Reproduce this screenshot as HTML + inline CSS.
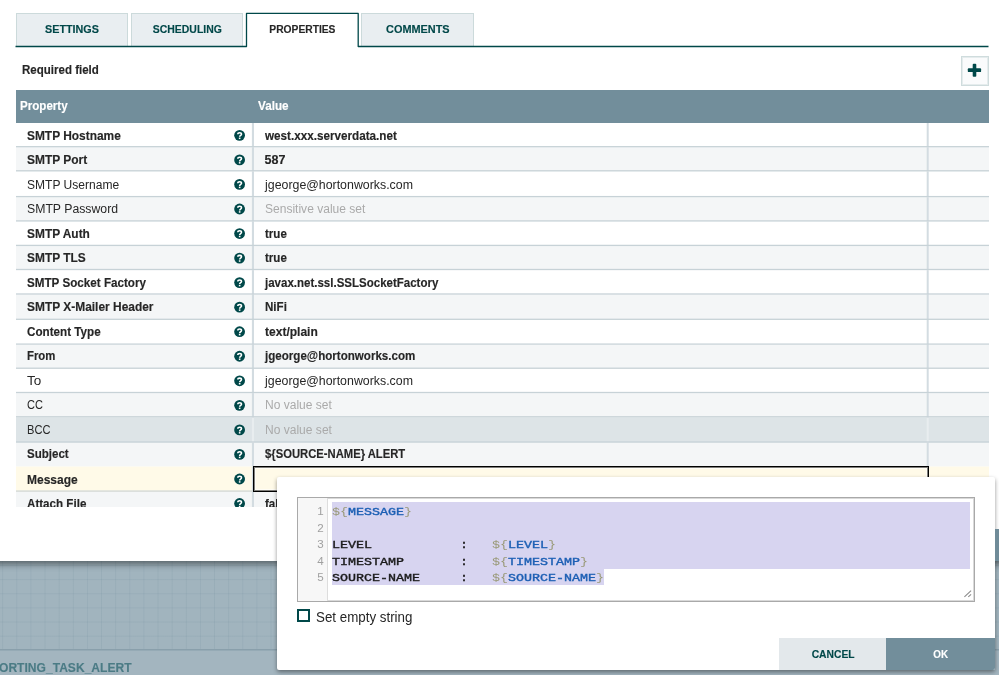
<!DOCTYPE html>
<html lang="en">
<head>
<meta charset="utf-8">
<title>Configure Reporting Task</title>
<style>
*{box-sizing:border-box;margin:0;padding:0}
html,body{width:999px;height:675px;overflow:hidden}
body{position:relative;font-family:"Liberation Sans",sans-serif;color:#262626;background:#a1b4be;font-size:13px}
.abs{position:absolute}
.sx{display:inline-block;white-space:nowrap;-webkit-text-stroke:.15px currentColor}
#wrap{position:absolute;left:0;top:0;width:999px;height:675px;will-change:transform;overflow:hidden}
/* canvas */
#canvas{left:0;top:0;width:999px;height:650px;background-color:#a1b4be;
 background-image:linear-gradient(to right,rgba(110,140,155,.17) 1.3px,transparent 1.3px),linear-gradient(to bottom,rgba(110,140,155,.17) 1.3px,transparent 1.3px);
 background-size:14.13px 14.13px;background-position:2.2px 14.2px}
#footer{left:0;top:649px;width:999px;height:26px;background:#a3b5bf;border-top:1px solid #899fab;box-shadow:inset 0 1px 0 #95aab5}
#footer span{-webkit-text-stroke:.15px currentColor;position:absolute;left:-1.5px;top:10px;font-weight:bold;font-size:13.3px;color:#4b7b85;white-space:nowrap;line-height:16px;transform-origin:0 50%;transform:scaleX(0.908)}
/* dialog */
#dialog{left:-20px;top:-20px;width:1040px;height:581px;background:#fff;box-shadow:0 3px 7px rgba(0,0,0,.48)}
#apply{left:995px;top:529px;width:10px;height:32px;background:#6f8b98;z-index:1}
/* tabs */
.tab{top:13px;height:33px;width:112.5px;background:#e9eef1;border:1px solid #ccdadb;border-bottom:none;color:#004849;font-weight:bold;font-size:11.6px;text-align:center;line-height:30px}
.tab.sel{background:#fff;border:none;color:#262626;height:35px;line-height:32px;z-index:2}
#tabsvg{left:0;top:0;width:999px;height:60px;z-index:3}
#req{-webkit-text-stroke:.15px currentColor;left:21.6px;top:62.3px;font-weight:bold;font-size:12.6px;line-height:16px;transform-origin:0 50%;transform:scaleX(0.915);white-space:nowrap}
#plus{left:961px;top:56px;width:28px;height:30px;background:#fafbfc;border:1px solid #cfdcdd;box-shadow:inset 0 0 0 1px rgba(204,218,219,.45)}
#plus svg{position:absolute;left:-1px;top:-1px;width:28px;height:30px}
#plus i{position:absolute;background:#004849;border-radius:.8px}
/* table */
#thead{left:15.5px;top:90px;width:973px;height:33px;background:#728e9b;color:#fff;font-weight:bold;font-size:12.6px;line-height:33.6px}
#thead span{-webkit-text-stroke:.15px currentColor;position:absolute;top:0;transform-origin:0 50%;white-space:nowrap}
.row{left:16px;width:973px;overflow:hidden}
#grid{left:16px;top:123px;width:973px;height:384px}
#rows{position:absolute;left:0;top:0;width:999px;height:507px;overflow:hidden}
.row .n{position:absolute;left:11px;top:0;transform-origin:0 50%;line-height:24px;font-size:12.5px;white-space:nowrap}
.row .v{position:absolute;left:249px;top:0;transform-origin:0 50%;line-height:24px;font-size:12.5px;white-space:nowrap}
.row .b{font-weight:bold;-webkit-text-stroke:.15px currentColor}
.row .u{color:#aaa}
.row .qw{position:absolute;left:217px;width:13px;height:13px}
.row .q{display:block;width:13px;height:13px}
/* popup */
#cut{left:0;top:507px;width:999px;height:54px;background:#fff}
#active{left:253px;top:466px;width:676px;height:26px;border:1px solid #000;box-shadow:inset 0 0 0 1px rgba(0,0,0,.5),inset 0 0 0 2px rgba(255,255,255,.55);background:#fffae8}
#pop{left:277px;top:477px;width:718px;height:192.7px;background:#fff;border-radius:2px;box-shadow:0 2px 4px rgba(0,0,0,.42)}
#ed{left:20px;top:20px;width:678px;height:105px;border:1px solid #a9a9a9;box-shadow:inset 0 0 0 1px rgba(170,170,170,.45);background:#fff;overflow:hidden}
#gut{left:0;top:0;width:30px;height:103px;background:#f7f7f7;border-right:1px solid #ddd}
.ln{position:absolute;left:0;width:25.6px;text-align:right;color:#a0a0a0;font-size:11.6px;height:16.6px;line-height:16.6px}
.selbg{position:absolute;background:#d7d4f0}
.cl{position:absolute;left:34.2px;height:16.6px;line-height:16.6px;font-family:"Liberation Mono",monospace;font-size:11.8px;transform-origin:0 50%;transform:scaleX(1.13);white-space:pre;color:#1a1a1a;font-weight:normal;-webkit-text-stroke:.4px currentColor}
.cl .k{color:#999977;-webkit-text-stroke:0}
.cl .a{color:#1c5fb4}
#grip{left:665px;top:91px;width:10px;height:10px}
#cb{left:20px;top:132px;width:13px;height:13px;border:2px solid #004849;background:#fff}
#cbl{left:39.3px;top:131.5px;font-size:13.8px;line-height:18px;white-space:nowrap;transform-origin:0 50%;transform:scaleX(0.967)}
.btn{top:161px;height:31.5px;line-height:32px;text-align:center;font-weight:bold;font-size:11.6px}
#cancel{left:502px;width:108px;background:#e3e8eb;color:#004849}
#ok{border-bottom-right-radius:2px}
#ok{left:609.3px;width:108.7px;background:#728e9b;color:#fff}
</style>
</head>
<body>
<div id="wrap">
<div id="canvas" class="abs"></div>
<div id="footer" class="abs"><span>ORTING_TASK_ALERT</span></div>
<div id="dialog" class="abs"></div>

<div class="abs tab" style="left:15.5px"><span class="sx" style="transform:scaleX(0.93)">SETTINGS</span></div>
<div class="abs tab" style="left:130.8px"><span class="sx" style="transform:scaleX(0.9)">SCHEDULING</span></div>
<div class="abs tab sel" style="left:246.1px"><span class="sx" style="transform:scaleX(0.885)">PROPERTIES</span></div>
<div class="abs tab" style="left:361.4px"><span class="sx" style="transform:scaleX(0.94)">COMMENTS</span></div>
<svg id="tabsvg" class="abs" viewBox="0 0 999 60"><path d="M15.5 46.5H246.5V13.4H358.2V46.5H988.5" fill="none" stroke="#004849" stroke-width="1.3" stroke-linejoin="round"/></svg>
<div id="req" class="abs">Required field</div>
<div id="plus" class="abs"><svg viewBox="0 0 28 30"><rect x="6.8" y="12.3" width="13.3" height="3.8" rx=".9" fill="#004849"/><rect x="11.7" y="7.8" width="3.6" height="12.9" rx=".9" fill="#004849"/></svg></div>

<div id="thead" class="abs"><span style="left:4.6px;transform:scaleX(0.92)">Property</span><span style="left:242.7px;transform:scaleX(0.93)">Value</span></div>
<div id="rows">
<svg id="grid" class="abs" viewBox="0 0 973 384" preserveAspectRatio="none"><rect x="0" y="-0.50" width="973" height="24.90" fill="#fff"/><rect x="235.9" y="-0.50" width="2.1" height="24.90" fill="#d3dce1"/><rect x="910.7" y="-0.50" width="2" height="24.90" fill="#d3dce1"/><rect x="0" y="24.35" width="973" height="24.15" fill="#f4f6f7"/><rect x="235.9" y="24.35" width="2.1" height="24.15" fill="#d3dce1"/><rect x="910.7" y="24.35" width="2" height="24.15" fill="#d3dce1"/><rect x="0" y="48.45" width="973" height="25.85" fill="#fff"/><rect x="235.9" y="48.45" width="2.1" height="25.85" fill="#d3dce1"/><rect x="910.7" y="48.45" width="2" height="25.85" fill="#d3dce1"/><rect x="0" y="74.25" width="973" height="24.35" fill="#f4f6f7"/><rect x="235.9" y="74.25" width="2.1" height="24.35" fill="#d3dce1"/><rect x="910.7" y="74.25" width="2" height="24.35" fill="#d3dce1"/><rect x="0" y="98.55" width="973" height="24.55" fill="#fff"/><rect x="235.9" y="98.55" width="2.1" height="24.55" fill="#d3dce1"/><rect x="910.7" y="98.55" width="2" height="24.55" fill="#d3dce1"/><rect x="0" y="123.05" width="973" height="24.15" fill="#f4f6f7"/><rect x="235.9" y="123.05" width="2.1" height="24.15" fill="#d3dce1"/><rect x="910.7" y="123.05" width="2" height="24.15" fill="#d3dce1"/><rect x="0" y="147.15" width="973" height="24.55" fill="#fff"/><rect x="235.9" y="147.15" width="2.1" height="24.55" fill="#d3dce1"/><rect x="910.7" y="147.15" width="2" height="24.55" fill="#d3dce1"/><rect x="0" y="171.65" width="973" height="25.35" fill="#f4f6f7"/><rect x="235.9" y="171.65" width="2.1" height="25.35" fill="#d3dce1"/><rect x="910.7" y="171.65" width="2" height="25.35" fill="#d3dce1"/><rect x="0" y="196.95" width="973" height="24.85" fill="#fff"/><rect x="235.9" y="196.95" width="2.1" height="24.85" fill="#d3dce1"/><rect x="910.7" y="196.95" width="2" height="24.85" fill="#d3dce1"/><rect x="0" y="221.75" width="973" height="24.15" fill="#f4f6f7"/><rect x="235.9" y="221.75" width="2.1" height="24.15" fill="#d3dce1"/><rect x="910.7" y="221.75" width="2" height="24.15" fill="#d3dce1"/><rect x="0" y="245.85" width="973" height="24.35" fill="#fff"/><rect x="235.9" y="245.85" width="2.1" height="24.35" fill="#d3dce1"/><rect x="910.7" y="245.85" width="2" height="24.35" fill="#d3dce1"/><rect x="0" y="270.15" width="973" height="24.35" fill="#f4f6f7"/><rect x="235.9" y="270.15" width="2.1" height="24.35" fill="#d3dce1"/><rect x="910.7" y="270.15" width="2" height="24.35" fill="#d3dce1"/><rect x="0" y="294.45" width="973" height="25.25" fill="#dde4e7"/><rect x="235.9" y="294.45" width="2.1" height="25.25" fill="#e8edef"/><rect x="910.7" y="294.45" width="2" height="25.25" fill="#e8edef"/><rect x="0" y="319.65" width="973" height="23.95" fill="#f4f6f7"/><rect x="235.9" y="319.65" width="2.1" height="23.95" fill="#d3dce1"/><rect x="910.7" y="319.65" width="2" height="23.95" fill="#d3dce1"/><rect x="0" y="343.55" width="973" height="25.25" fill="#fffae8"/><rect x="235.9" y="343.55" width="2.1" height="25.25" fill="#d3dce1"/><rect x="910.7" y="343.55" width="2" height="25.25" fill="#d3dce1"/><rect x="0" y="368.75" width="973" height="24.65" fill="#f4f6f7"/><rect x="235.9" y="368.75" width="2.1" height="24.65" fill="#d3dce1"/><rect x="910.7" y="368.75" width="2" height="24.65" fill="#d3dce1"/><rect x="0" y="23.05" width="973" height="1.3" fill="#c7d2d7"/><rect x="0" y="47.15" width="973" height="1.3" fill="#c7d2d7"/><rect x="0" y="72.95" width="973" height="1.3" fill="#c7d2d7"/><rect x="0" y="97.25" width="973" height="1.3" fill="#c7d2d7"/><rect x="0" y="121.75" width="973" height="1.3" fill="#c7d2d7"/><rect x="0" y="145.85" width="973" height="1.3" fill="#c7d2d7"/><rect x="0" y="170.35" width="973" height="1.3" fill="#c7d2d7"/><rect x="0" y="195.65" width="973" height="1.3" fill="#c7d2d7"/><rect x="0" y="220.45" width="973" height="1.3" fill="#c7d2d7"/><rect x="0" y="244.55" width="973" height="1.3" fill="#c7d2d7"/><rect x="0" y="268.85" width="973" height="1.3" fill="#c7d2d7"/><rect x="0" y="293.15" width="973" height="1.3" fill="#c7d2d7"/><rect x="0" y="318.35" width="973" height="1.3" fill="#c7d2d7"/><rect x="0" y="367.45" width="973" height="1.3" fill="#cfd6d6"/><rect x="0" y="392.05" width="973" height="1.3" fill="#c7d2d7"/></svg>
<div class="abs row" style="top:122px;height:26px"><span class="n b" style="left:10.90px;transform:scaleX(0.9530);top:1.77px">SMTP Hostname</span><span class="qw" style="top:7px"><svg class="q" viewBox="0 0 13 13"><g transform="translate(1.10 0.85)"><circle cx="5.5" cy="5.5" r="5.4" fill="#004849"/><path d="M3.7 4.3C3.7 2.3 7.4 2.3 7.4 4.3C7.4 5.6 5.55 5.5 5.55 7" fill="none" stroke="#fff" stroke-width="1.55"/><rect x="4.75" y="7.7" width="1.6" height="1.5" fill="#fff"/></g></svg></span><span class="v b" style="left:248.60px;transform:scaleX(0.9346);top:1.77px">west.xxx.serverdata.net</span></div>
<div class="abs row" style="top:147px;height:26px"><span class="n b" style="left:10.90px;transform:scaleX(0.9569);top:1.02px">SMTP Port</span><span class="qw" style="top:7px"><svg class="q" viewBox="0 0 13 13"><g transform="translate(1.10 0.39)"><circle cx="5.5" cy="5.5" r="5.4" fill="#004849"/><path d="M3.7 4.3C3.7 2.3 7.4 2.3 7.4 4.3C7.4 5.6 5.55 5.5 5.55 7" fill="none" stroke="#fff" stroke-width="1.55"/><rect x="4.75" y="7.7" width="1.6" height="1.5" fill="#fff"/></g></svg></span><span class="v b" style="left:248.60px;transform:scaleX(1.0000);top:1.02px">587</span></div>
<div class="abs row" style="top:171px;height:26px"><span class="n" style="left:10.90px;transform:scaleX(0.9631);top:1.57px">SMTP Username</span><span class="qw" style="top:7px"><svg class="q" viewBox="0 0 13 13"><g transform="translate(1.10 0.94)"><circle cx="5.5" cy="5.5" r="5.4" fill="#004849"/><path d="M3.7 4.3C3.7 2.3 7.4 2.3 7.4 4.3C7.4 5.6 5.55 5.5 5.55 7" fill="none" stroke="#fff" stroke-width="1.55"/><rect x="4.75" y="7.7" width="1.6" height="1.5" fill="#fff"/></g></svg></span><span class="v " style="left:248.60px;transform:scaleX(0.9894);top:1.57px">jgeorge@hortonworks.com</span></div>
<div class="abs row" style="top:196px;height:26px"><span class="n" style="left:10.90px;transform:scaleX(0.9806);top:1.12px">SMTP Password</span><span class="qw" style="top:7px"><svg class="q" viewBox="0 0 13 13"><g transform="translate(1.10 0.49)"><circle cx="5.5" cy="5.5" r="5.4" fill="#004849"/><path d="M3.7 4.3C3.7 2.3 7.4 2.3 7.4 4.3C7.4 5.6 5.55 5.5 5.55 7" fill="none" stroke="#fff" stroke-width="1.55"/><rect x="4.75" y="7.7" width="1.6" height="1.5" fill="#fff"/></g></svg></span><span class="v u" style="left:248.60px;transform:scaleX(0.9627);top:1.12px">Sensitive value set</span></div>
<div class="abs row" style="top:220px;height:26px"><span class="n b" style="left:10.90px;transform:scaleX(0.9536);top:1.67px">SMTP Auth</span><span class="qw" style="top:8px"><svg class="q" viewBox="0 0 13 13"><g transform="translate(1.10 0.03)"><circle cx="5.5" cy="5.5" r="5.4" fill="#004849"/><path d="M3.7 4.3C3.7 2.3 7.4 2.3 7.4 4.3C7.4 5.6 5.55 5.5 5.55 7" fill="none" stroke="#fff" stroke-width="1.55"/><rect x="4.75" y="7.7" width="1.6" height="1.5" fill="#fff"/></g></svg></span><span class="v b" style="left:248.60px;transform:scaleX(0.9260);top:1.67px">true</span></div>
<div class="abs row" style="top:245px;height:26px"><span class="n b" style="left:10.90px;transform:scaleX(0.9537);top:1.22px">SMTP TLS</span><span class="qw" style="top:7px"><svg class="q" viewBox="0 0 13 13"><g transform="translate(1.10 0.57)"><circle cx="5.5" cy="5.5" r="5.4" fill="#004849"/><path d="M3.7 4.3C3.7 2.3 7.4 2.3 7.4 4.3C7.4 5.6 5.55 5.5 5.55 7" fill="none" stroke="#fff" stroke-width="1.55"/><rect x="4.75" y="7.7" width="1.6" height="1.5" fill="#fff"/></g></svg></span><span class="v b" style="left:248.60px;transform:scaleX(0.9260);top:1.22px">true</span></div>
<div class="abs row" style="top:269px;height:26px"><span class="n b" style="left:10.90px;transform:scaleX(0.9327);top:1.77px">SMTP Socket Factory</span><span class="qw" style="top:8px"><svg class="q" viewBox="0 0 13 13"><g transform="translate(1.10 0.12)"><circle cx="5.5" cy="5.5" r="5.4" fill="#004849"/><path d="M3.7 4.3C3.7 2.3 7.4 2.3 7.4 4.3C7.4 5.6 5.55 5.5 5.55 7" fill="none" stroke="#fff" stroke-width="1.55"/><rect x="4.75" y="7.7" width="1.6" height="1.5" fill="#fff"/></g></svg></span><span class="v b" style="left:248.60px;transform:scaleX(0.9206);top:1.77px">javax.net.ssl.SSLSocketFactory</span></div>
<div class="abs row" style="top:294px;height:26px"><span class="n b" style="left:10.90px;transform:scaleX(0.9551);top:1.32px">SMTP X-Mailer Header</span><span class="qw" style="top:7px"><svg class="q" viewBox="0 0 13 13"><g transform="translate(1.10 0.66)"><circle cx="5.5" cy="5.5" r="5.4" fill="#004849"/><path d="M3.7 4.3C3.7 2.3 7.4 2.3 7.4 4.3C7.4 5.6 5.55 5.5 5.55 7" fill="none" stroke="#fff" stroke-width="1.55"/><rect x="4.75" y="7.7" width="1.6" height="1.5" fill="#fff"/></g></svg></span><span class="v b" style="left:248.60px;transform:scaleX(0.9260);top:1.32px">NiFi</span></div>
<div class="abs row" style="top:318px;height:26px"><span class="n b" style="left:10.90px;transform:scaleX(0.9326);top:1.87px">Content Type</span><span class="qw" style="top:8px"><svg class="q" viewBox="0 0 13 13"><g transform="translate(1.10 0.21)"><circle cx="5.5" cy="5.5" r="5.4" fill="#004849"/><path d="M3.7 4.3C3.7 2.3 7.4 2.3 7.4 4.3C7.4 5.6 5.55 5.5 5.55 7" fill="none" stroke="#fff" stroke-width="1.55"/><rect x="4.75" y="7.7" width="1.6" height="1.5" fill="#fff"/></g></svg></span><span class="v b" style="left:248.60px;transform:scaleX(0.9619);top:1.87px">text/plain</span></div>
<div class="abs row" style="top:343px;height:26px"><span class="n b" style="left:10.90px;transform:scaleX(0.9082);top:1.42px">From</span><span class="qw" style="top:7px"><svg class="q" viewBox="0 0 13 13"><g transform="translate(1.10 0.75)"><circle cx="5.5" cy="5.5" r="5.4" fill="#004849"/><path d="M3.7 4.3C3.7 2.3 7.4 2.3 7.4 4.3C7.4 5.6 5.55 5.5 5.55 7" fill="none" stroke="#fff" stroke-width="1.55"/><rect x="4.75" y="7.7" width="1.6" height="1.5" fill="#fff"/></g></svg></span><span class="v b" style="left:248.60px;transform:scaleX(0.9268);top:1.42px">jgeorge@hortonworks.com</span></div>
<div class="abs row" style="top:367px;height:26px"><span class="n" style="left:10.90px;transform:scaleX(1.0800);top:1.97px">To</span><span class="qw" style="top:8px"><svg class="q" viewBox="0 0 13 13"><g transform="translate(1.10 0.30)"><circle cx="5.5" cy="5.5" r="5.4" fill="#004849"/><path d="M3.7 4.3C3.7 2.3 7.4 2.3 7.4 4.3C7.4 5.6 5.55 5.5 5.55 7" fill="none" stroke="#fff" stroke-width="1.55"/><rect x="4.75" y="7.7" width="1.6" height="1.5" fill="#fff"/></g></svg></span><span class="v " style="left:248.60px;transform:scaleX(0.9894);top:1.97px">jgeorge@hortonworks.com</span></div>
<div class="abs row" style="top:392px;height:26px"><span class="n" style="left:10.90px;transform:scaleX(0.8850);top:1.22px">CC</span><span class="qw" style="top:7px"><svg class="q" viewBox="0 0 13 13"><g transform="translate(1.10 0.85)"><circle cx="5.5" cy="5.5" r="5.4" fill="#004849"/><path d="M3.7 4.3C3.7 2.3 7.4 2.3 7.4 4.3C7.4 5.6 5.55 5.5 5.55 7" fill="none" stroke="#fff" stroke-width="1.55"/><rect x="4.75" y="7.7" width="1.6" height="1.5" fill="#fff"/></g></svg></span><span class="v u" style="left:248.60px;transform:scaleX(0.9618);top:1.22px">No value set</span></div>
<div class="abs row" style="top:417px;height:26px"><span class="n" style="left:10.90px;transform:scaleX(0.8880);top:1.07px">BCC</span><span class="qw" style="top:7px"><svg class="q" viewBox="0 0 13 13"><g transform="translate(1.10 0.39)"><circle cx="5.5" cy="5.5" r="5.4" fill="#004849"/><path d="M3.7 4.3C3.7 2.3 7.4 2.3 7.4 4.3C7.4 5.6 5.55 5.5 5.55 7" fill="none" stroke="#fff" stroke-width="1.55"/><rect x="4.75" y="7.7" width="1.6" height="1.5" fill="#fff"/></g></svg></span><span class="v u" style="left:248.60px;transform:scaleX(0.9631);top:1.07px">No value set</span></div>
<div class="abs row" style="top:441px;height:26px"><span class="n b" style="left:10.90px;transform:scaleX(0.9237);top:1.32px">Subject</span><span class="qw" style="top:7px"><svg class="q" viewBox="0 0 13 13"><g transform="translate(1.10 0.94)"><circle cx="5.5" cy="5.5" r="5.4" fill="#004849"/><path d="M3.7 4.3C3.7 2.3 7.4 2.3 7.4 4.3C7.4 5.6 5.55 5.5 5.55 7" fill="none" stroke="#fff" stroke-width="1.55"/><rect x="4.75" y="7.7" width="1.6" height="1.5" fill="#fff"/></g></svg></span><span class="v b" style="left:248.60px;transform:scaleX(0.9001);top:1.32px">${SOURCE-NAME} ALERT</span></div>
<div class="abs row" style="top:466px;height:26px"><span class="n b" style="left:10.90px;transform:scaleX(0.9594);top:1.77px">Message</span><span class="qw" style="top:7px"><svg class="q" viewBox="0 0 13 13"><g transform="translate(1.10 0.48)"><circle cx="5.5" cy="5.5" r="5.4" fill="#004849"/><path d="M3.7 4.3C3.7 2.3 7.4 2.3 7.4 4.3C7.4 5.6 5.55 5.5 5.55 7" fill="none" stroke="#fff" stroke-width="1.55"/><rect x="4.75" y="7.7" width="1.6" height="1.5" fill="#fff"/></g></svg></span><span class="v b" style="left:249.00px;transform:scaleX(1.0000);top:1.77px"></span></div>
<div class="abs row" style="top:490px;height:26px"><span class="n b" style="left:10.90px;transform:scaleX(0.9286);top:1.72px">Attach File</span><span class="qw" style="top:8px"><svg class="q" viewBox="0 0 13 13"><g transform="translate(1.10 0.02)"><circle cx="5.5" cy="5.5" r="5.4" fill="#004849"/><path d="M3.7 4.3C3.7 2.3 7.4 2.3 7.4 4.3C7.4 5.6 5.55 5.5 5.55 7" fill="none" stroke="#fff" stroke-width="1.55"/><rect x="4.75" y="7.7" width="1.6" height="1.5" fill="#fff"/></g></svg></span><span class="v b" style="left:248.60px;transform:scaleX(0.9260);top:1.72px">false</span></div>
</div>

<div id="cut" class="abs"></div>
<div id="apply" class="abs"></div>
<div id="active" class="abs"></div>
<div id="pop" class="abs">
 <div id="ed" class="abs">
  <div id="gut" class="abs">
   <div class="ln" style="top:4.9px">1</div>
   <div class="ln" style="top:21.5px">2</div>
   <div class="ln" style="top:38.1px">3</div>
   <div class="ln" style="top:54.6px">4</div>
   <div class="ln" style="top:71.2px">5</div>
  </div>
  <div class="selbg" style="left:34px;top:4px;width:637.5px;height:67px"></div>
  <div class="selbg" style="left:34px;top:71px;width:272px;height:16px"></div>
  <div class="cl" style="top:5.9px"><span class="k">${</span><span class="a">MESSAGE</span><span class="k">}</span></div>
  <div class="cl" style="top:22.5px"> </div>
  <div class="cl" style="top:39.1px">LEVEL           :   <span class="k">${</span><span class="a">LEVEL</span><span class="k">}</span></div>
  <div class="cl" style="top:55.6px">TIMESTAMP       :   <span class="k">${</span><span class="a">TIMESTAMP</span><span class="k">}</span></div>
  <div class="cl" style="top:72.2px">SOURCE-NAME     :   <span class="k">${</span><span class="a">SOURCE-NAME</span><span class="k">}</span></div>
  <svg id="grip" class="abs" viewBox="0 0 10 10"><path d="M1.4 7.9L8.1 1.6M5.3 7.9L8.1 5.4" stroke="#8c8c8c" stroke-width="1.1" fill="none"/></svg>
 </div>
 <div id="cb" class="abs"></div>
 <div id="cbl" class="abs">Set empty string</div>
 <div id="cancel" class="abs btn"><span class="sx" style="transform:scaleX(0.89)">CANCEL</span></div>
 <div id="ok" class="abs btn"><span class="sx" style="transform:scaleX(0.85)">OK</span></div>
</div>
</div>
</body>
</html>
